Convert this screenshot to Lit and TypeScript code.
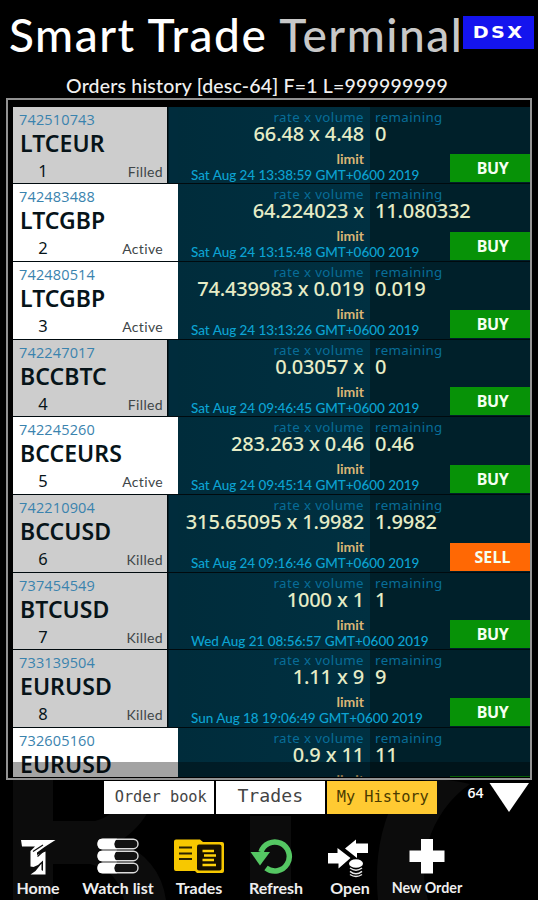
import { LitElement, html, css, svg } from "lit";
import { customElement, property } from "lit/decorators.js";

interface Order {
  id: string;
  pair: string;
  status: "Filled" | "Active" | "Killed";
  value: string;
  remaining: string;
  date: string;
  side: "BUY" | "SELL";
}

const ORDERS: Order[] = [
  { id: "742510743", pair: "LTCEUR", status: "Filled", value: "66.48 x 4.48", remaining: "0", date: "Sat Aug 24 13:38:59 GMT+0600 2019", side: "BUY" },
  { id: "742483488", pair: "LTCGBP", status: "Active", value: "64.224023 x", remaining: "11.080332", date: "Sat Aug 24 13:15:48 GMT+0600 2019", side: "BUY" },
  { id: "742480514", pair: "LTCGBP", status: "Active", value: "74.439983 x 0.019", remaining: "0.019", date: "Sat Aug 24 13:13:26 GMT+0600 2019", side: "BUY" },
  { id: "742247017", pair: "BCCBTC", status: "Filled", value: "0.03057 x", remaining: "0", date: "Sat Aug 24 09:46:45 GMT+0600 2019", side: "BUY" },
  { id: "742245260", pair: "BCCEURS", status: "Active", value: "283.263 x 0.46", remaining: "0.46", date: "Sat Aug 24 09:45:14 GMT+0600 2019", side: "BUY" },
  { id: "742210904", pair: "BCCUSD", status: "Killed", value: "315.65095 x 1.9982", remaining: "1.9982", date: "Sat Aug 24 09:16:46 GMT+0600 2019", side: "SELL" },
  { id: "737454549", pair: "BTCUSD", status: "Killed", value: "1000 x 1", remaining: "1", date: "Wed Aug 21 08:56:57 GMT+0600 2019", side: "BUY" },
  { id: "733139504", pair: "EURUSD", status: "Killed", value: "1.11 x 9", remaining: "9", date: "Sun Aug 18 19:06:49 GMT+0600 2019", side: "BUY" },
  { id: "732605160", pair: "EURUSD", status: "Active", value: "0.9 x 11", remaining: "11", date: "", side: "BUY" },
];

@customElement("order-row")
class OrderRow extends LitElement {
  @property({ attribute: false }) order!: Order;
  @property({ type: Number }) index = 1;
  @property({ type: Boolean }) partial = false;

  static styles = css`
    :host {
      display: grid;
      grid-template-columns: 165px 192px 160px;
      box-sizing: border-box;
      border-bottom: 1px solid #000a0e;
      font-family: "Noto Sans", sans-serif;
      white-space: nowrap;
      background: #002c3c;
    }
    .ticket {
      box-sizing: border-box;
      width: 154px;
      background: #cdcdcd;
      padding: 4px 4px 0 6px;
      color: #071419;
      box-shadow: 1.5px 0 0 #000a0e;
    }
    .active { width: 165px; background: #fff; padding-right: 15px; }
    .id {
      font: 14.5px/17px "Open Sans", sans-serif;
      letter-spacing: 0.15px;
      color: #3a83ae;
    }
    .pair { font-size: 23px; font-weight: 600; line-height: 24px; margin-top: 2.5px; padding-left: 1px; letter-spacing: 0.05px; }
    .foot { display: flex; justify-content: space-between; align-items: baseline; line-height: 20px; margin-top: 6.5px; padding-left: 19px; }
    .num { font-size: 16.5px; width: 10px; text-align: center; }
    .status { font: 14px/20px "Lato", sans-serif; color: #404648; letter-spacing: 0.35px; }
    .rate {
      background: linear-gradient(90deg, #002c3b, #003041);
      text-align: right;
      padding: 3px 6px 0 0;
    }
    .rest { background: #00202a; padding: 3px 0 0 5px; position: relative; }
    .caption { font-size: 13.3px; line-height: 14px; color: #086d98; letter-spacing: 0.4px; }
    .value { font-size: 20px; font-weight: 500; line-height: 20px; color: #e6ecc6; height: 21px; letter-spacing: -0.15px; }
    .limit { font: 700 14px/18px "Lato", sans-serif; color: #d9b676; margin-top: 4.5px; }
    .date {
      position: relative;
      z-index: 1;
      width: 0;
      margin-left: 13px;
      text-align: left;
      font: 500 13.5px/16px "Lato", sans-serif;
      letter-spacing: -0.03px;
      color: #0ca3d2;
      margin-top: -1px;
    }
    .side {
      position: absolute;
      right: 0;
      bottom: 1px;
      width: 80px;
      height: 28px;
      background: #079207;
      color: #f4fff0;
      font: 700 16px/29px "Noto Sans", sans-serif;
      letter-spacing: -0.35px;
      text-align: center;
      text-indent: 5px;
    }
    .sell { background: #ff6804; letter-spacing: 0.1px; }
  `;

  render() {
    const o = this.order;
    return html`
      <div class="ticket ${o.status === "Active" ? "active" : ""}">
        <div class="id">${o.id}</div>
        <div class="pair">${o.pair}</div>
        ${this.partial
          ? null
          : html`<div class="foot"><span class="num">${this.index}</span><span class="status">${o.status}</span></div>`}
      </div>
      <div class="rate">
        <div class="caption">rate x volume</div>
        <div class="value">${o.value}</div>
        <div class="limit">limit</div>
        <div class="date">${o.date}</div>
      </div>
      <div class="rest">
        <div class="caption">remaining</div>
        <div class="value">${o.remaining}</div>
        <div class="side ${o.side === "SELL" ? "sell" : ""}">${this.partial ? "" : o.side}</div>
      </div>
    `;
  }
}

const bar = (y: number) => svg`
  <rect x="1" y=${y} width="40" height="9.5" rx="4.7" fill="#111" stroke="#dcdcdc" stroke-width="1.4"/>
  <path d=${`M20 ${y - 0.5} H5 Q0.5 ${y - 0.5} 0.5 ${y + 4.75} T5 ${y + 10} H20 Q14.5 ${y + 4.75} 20 ${y - 0.5}Z`} fill="#fff"/>`;

const ICONS = {
  home: html`<svg width="36" height="38" viewBox="0 0 36 38" fill="#fff">
    <path d="M1 2 H35.500 L24.500 9 L17 14.500 L17 17 L25.500 13.500 V36.500 H10.500 L15.500 33 L21.500 25.500 V32 L23 33 V22.500 L18 27 L13.500 29 L10.500 28.500 V13 L15 8.500 H2Z"/>
    <path d="M13 13.500 L23 7 M17.500 18.500 L24 12.500" fill="none" stroke="#111" stroke-width="1.300"/></svg>`,
  watch: html`<svg width="42" height="38" viewBox="0 0 42 38">${bar(1.2)}${bar(13.2)}${bar(25.2)}</svg>`,
  trades: html`<svg width="52" height="38" viewBox="0 0 52 38">
    <path d="M3 1.500 H27 L30 4 H49 Q51 4 51 6 V33 Q51 35 49 35 H24 L22 33 H3 Q1 33 1 31 V3.500 Q1 1.500 3 1.500Z" fill="#f7c800"/>
    <rect x="24" y="6.500" width="24.500" height="26" rx="2" fill="#161000"/>
    <path d="M6 9.500H19 M6 15.500H19 M6 21H19" stroke="#2b2200" stroke-width="1.800"/>
    <path d="M29.500 13H41 M31 17.500H43 M29.500 22H41 M29.500 27H43" stroke="#ffd20a" stroke-width="2.300"/></svg>`,
  refresh: html`<svg width="52" height="38" viewBox="0 0 52 38">
    <path d="M11 14 A14.500 14.500 0 1 1 16 30" fill="none" stroke="#55c763" stroke-width="5.500"/>
    <path d="M0.500 14 H20 L10 27.500Z" fill="#55c763"/></svg>`,
  open: html`<svg width="46" height="40" viewBox="0 0 46 40" fill="#fff">
    <path d="M18 10.500 L29 1.500 V5.500 H41 V15 H30 V20Z"/>
    <path d="M1 15 H10.500 V10 L23.500 20 L11.500 30.500 V25.500 H1Z"/>
    <ellipse cx="29" cy="25.500" rx="7" ry="4.300"/>
    <path d="M23 30 Q29 34.500 35 30 M23 33.300 Q29 38 35 33.300 M23 36.500 Q29 40.500 35 36.500" fill="none" stroke="#e8e8e8" stroke-width="1.500"/></svg>`,
  plus: html`<svg width="36" height="38" viewBox="0 0 36 38"><path d="M12 1H24V12.500H35.500V24H24V35.500H12V24H0.500V12.500H12Z" fill="#fff"/></svg>`,
};

@customElement("app-root")
class AppRoot extends LitElement {
  static styles = css`
    :host {
      display: flex;
      flex-direction: column;
      position: relative;
      width: 538px;
      height: 900px;
      overflow: hidden;
      background: #000;
      color: #fff;
      font-family: "Lato", sans-serif;
      white-space: nowrap;
    }
    .watermark { position: absolute; left: 0; bottom: 0; }
    .head { display: flex; height: 70px; padding-left: 9px; }
    .title { font-size: 46px; font-weight: 500; line-height: 69px; letter-spacing: 1.55px; width: 454px; }
    .dim { color: #c8c8c8; }
    .badge {
      width: 71px; height: 33px; margin-top: 16px; background: #1414ee;
      display: grid; place-items: center;
    }
    .dsx { font: 700 16px/33px "DejaVu Sans", sans-serif; letter-spacing: 2px; transform: scaleX(1.2); padding-left: 1px; }
    .sub { height: 28px; padding-left: 66px; font-size: 19.5px; line-height: 32px; font-weight: 500; letter-spacing: 0.18px; color: #f0f0f0; position: relative; }
    .frame {
      position: relative;
      box-sizing: border-box;
      margin-left: 6px;
      width: 526px;
      height: 682px;
      border: 2px solid #929292;
      padding: 7px 0 0 5px;
      background: #000;
      overflow: hidden;
    }
    .list {
      display: grid;
      grid-template-rows: 77px 78px 78px 77px 78px 78px 77px 78px 78px;
      width: 517px;
      height: 670px;
      overflow: hidden;
    }
    .shade { position: absolute; left: 0; right: 0; bottom: 0; height: 16px; background: rgba(0, 0, 0, 0.36); }
    .tabs { display: flex; gap: 2px; padding-left: 104px; height: 42px; position: relative; padding-top: 1px; }
    .tab {
      width: 109.500px; height: 33px; background: #fff; color: #444;
      font: 15.300px/32px "DejaVu Sans Mono", monospace; text-align: center; box-sizing: border-box; padding-left: 4px;
    }
    .big { font-size: 18.200px; padding-left: 0; line-height: 30px; }
    .selected { background: #ffca32; color: #4a3a00; padding-left: 2px; }
    .count { font: 600 14px/24px "Open Sans", sans-serif; margin-left: 29px; width: 18px; }
    .down { margin-top: 1.5px; }
    .nav {
      display: grid;
      grid-template-columns: 76px 84px 78px 76px 72px 82px;
      position: relative;
      padding-top: 14.500px;
    }
    .item { display: flex; flex-direction: column; align-items: center; height: 60px; }
    .pic { height: 40px; display: flex; align-items: flex-start; }
    .label { font-size: 16px; font-weight: 700; line-height: 20px; color: #eee; }
    .small { font-size: 14.300px; }
  `;

  private item(icon: unknown, text: string, cls = "") {
    return html`<div class="item"><div class="pic">${icon}</div><div class="label ${cls}">${text}</div></div>`;
  }

  render() {
    return html`
      <svg class="watermark" width="538" height="120" viewBox="0 0 538 120">
        <g fill="#0c0c0c">
          <path d="M13 0H53V120H13Z"/>
          <path d="M53 61H120Q145 45 154 18H120Q115 36 95 41H53Z"/>
          <path d="M53 61H118Q160 78 166 120H124Q118 90 90 84H53Z"/>
          <path d="M250 36H291V120H250Z"/>
          <path d="M378 120Q372 60 398 12Q420 -8 470 4Q440 25 428 62Q420 92 428 120Z"/>
        </g>
      </svg>
      <div class="head">
        <div class="title">Smart Trade <span class="dim">Terminal</span></div>
        <div class="badge"><span class="dsx">DSX</span></div>
      </div>
      <div class="sub">Orders history [desc-64] F=1 L=999999999</div>
      <div class="frame">
        <div class="list">
          ${ORDERS.map((o, i) => html`<order-row .order=${o} .index=${i + 1} .partial=${i === ORDERS.length - 1}></order-row>`)}
        </div>
        <div class="shade"></div>
      </div>
      <div class="tabs">
        <div class="tab">Order book</div>
        <div class="tab big">Trades</div>
        <div class="tab selected">My History</div>
        <div class="count">64</div>
        <svg class="down" width="42" height="30" viewBox="0 0 42 30"><path d="M1.500 0H41L21 29Z" fill="#fff"/></svg>
      </div>
      <div class="nav">
        ${this.item(ICONS.home, "Home")}
        ${this.item(ICONS.watch, "Watch list")}
        ${this.item(ICONS.trades, "Trades")}
        ${this.item(ICONS.refresh, "Refresh")}
        ${this.item(ICONS.open, "Open")}
        ${this.item(ICONS.plus, "New Order", "small")}
      </div>
    `;
  }
}
